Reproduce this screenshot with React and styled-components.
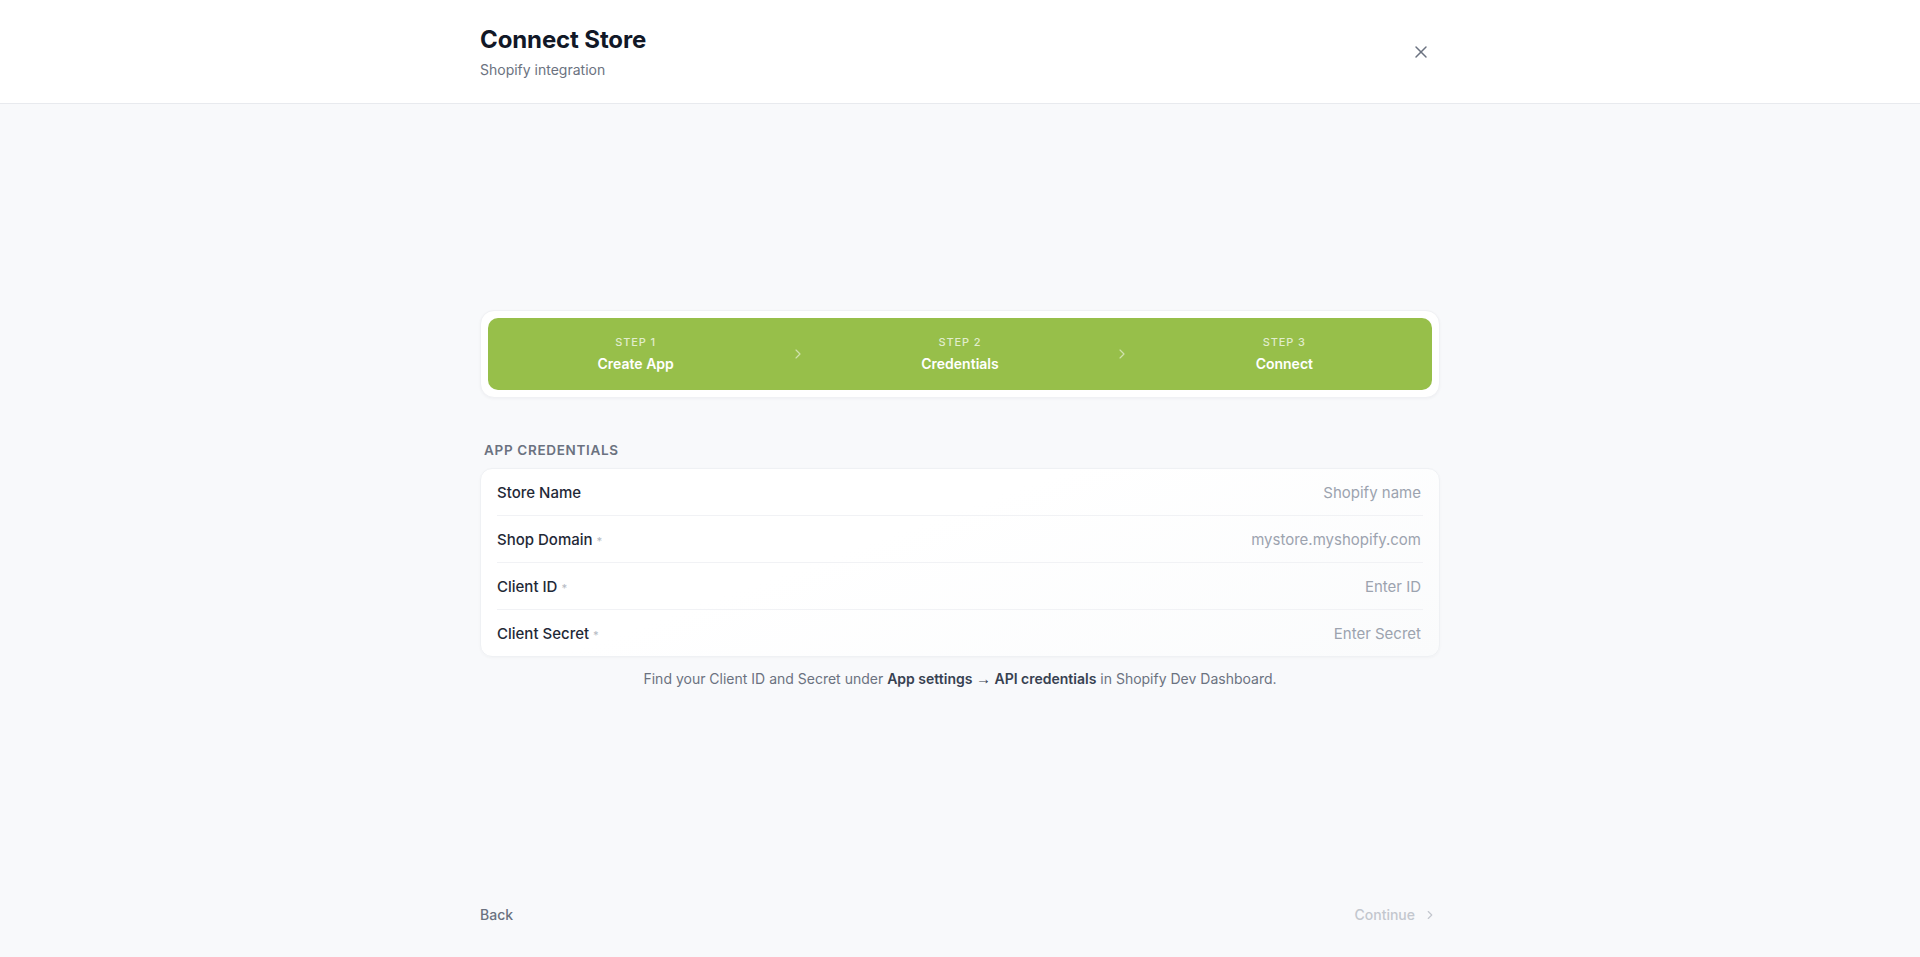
import React from 'react'
import styled, { createGlobalStyle } from 'styled-components'
import { X, ChevronRight } from 'lucide-react'

const GlobalStyle = createGlobalStyle`
  * { box-sizing: border-box; }
  body {
    margin: 0;
    font-family: Inter, "Noto Sans", "Liberation Sans", sans-serif;
    background: #f8f9fb;
    color: #111827;
  }
`

const Page = styled.div`
  min-height: 100vh;
  display: flex;
  flex-direction: column;
`
const Header = styled.header`
  background: #fff;
  border-bottom: 1px solid #e8eaee;
`
const Inner = styled.div`
  width: 960px;
  margin: 0 auto;
`
const HeaderInner = styled(Inner)`
  display: flex;
  align-items: center;
  justify-content: space-between;
  padding: 24px 0 23px;
`
const Title = styled.h1`
  margin: 0;
  font-size: 24px;
  line-height: 32px;
  font-weight: 700;
  color: #111827;
  letter-spacing: -0.005em;
`
const Subtitle = styled.p`
  margin: 4px 0 0;
  font-size: 14px;
  line-height: 20px;
  color: #6b7280;
`
const IconButton = styled.button`
  border: 0;
  background: none;
  padding: 4px;
  margin-right: 5px;
  display: flex;
  color: #6b7280;
  cursor: pointer;
`
const Main = styled.main`
  flex: 1;
  padding-top: 206px;
`
const StepperCard = styled.div`
  background: #fff;
  border: 1px solid #f0f1f4;
  border-radius: 14px;
  padding: 7px;
  box-shadow: 0 1px 3px rgba(16, 24, 40, 0.04);
`
const StepBar = styled.div`
  height: 72px;
  background: #97bf4a;
  border-radius: 10px;
  display: flex;
  align-items: center;
`
const Step = styled.div`
  flex: 1;
  display: flex;
  flex-direction: column;
  align-items: center;
  gap: 4px;
`
const StepNum = styled.span`
  font-size: 11px;
  line-height: 16px;
  font-weight: 500;
  letter-spacing: 0.08em;
  color: rgba(255, 255, 255, 0.72);
`
const StepName = styled.span`
  font-size: 14px;
  line-height: 20px;
  font-weight: 600;
  color: #fff;
`
const StepArrow = styled.div`
  width: 29px;
  display: flex;
  justify-content: center;
  color: rgba(255, 255, 255, 0.55);
`
const SectionLabel = styled.div`
  margin: 42px 0 8px;
  padding-left: 4px;
  font-size: 13.5px;
  line-height: 20px;
  font-weight: 600;
  letter-spacing: 0.05em;
  color: #6b7280;
`
const FormCard = styled.div`
  background: linear-gradient(160deg, #ffffff 0%, #ffffff 40%, #fafbfc 100%);
  border: 1px solid #eff1f4;
  border-radius: 12px;
  padding: 0 16px;
  box-shadow: 0 1px 3px rgba(16, 24, 40, 0.03);
`
const Row = styled.label`
  height: 47px;
  display: flex;
  align-items: center;
  justify-content: space-between;
  border-bottom: 1px solid #f1f2f5;
  &:last-child { border-bottom: 0; height: 46px; }
`
const Label = styled.span`
  font-size: 15px;
  font-weight: 500;
  color: #1f2937;
  white-space: nowrap;
`
const Required = styled.span`
  margin-left: 4px;
  color: #b6bbc4;
  font-size: 11px;
`
const Input = styled.input`
  flex: 1;
  border: 0;
  outline: none;
  background: transparent;
  text-align: right;
  font: inherit;
  font-size: 15px;
  color: #111827;
  &::placeholder { color: #9ca3af; }
`
const Help = styled.p`
  margin: 12px 0 0;
  text-align: center;
  font-size: 14px;
  line-height: 20px;
  color: #6b7280;
  b { font-weight: 600; color: #374151; }
`
const Arrow = styled.span`
  font-family: "Liberation Sans", sans-serif;
  font-weight: 400;
  font-size: 15px;
  line-height: 1;
`
const Footer = styled(Inner)`
  display: flex;
  justify-content: space-between;
  align-items: center;
  padding-bottom: 32px;
`
const FooterButton = styled.button`
  border: 0;
  background: none;
  padding: 0 ${({ disabled }) => (disabled ? '3px' : '0')} 0 0;
  display: flex;
  align-items: center;
  gap: 8px;
  font: inherit;
  font-size: 14px;
  line-height: 20px;
  font-weight: 500;
  color: ${({ disabled }) => (disabled ? '#c3c7ce' : '#6b7280')};
  cursor: ${({ disabled }) => (disabled ? 'default' : 'pointer')};
`

const steps = [
  { num: 'STEP 1', name: 'Create App' },
  { num: 'STEP 2', name: 'Credentials' },
  { num: 'STEP 3', name: 'Connect' },
]

const fields = [
  { label: 'Store Name', placeholder: 'Shopify name' },
  { label: 'Shop Domain', placeholder: 'mystore.myshopify.com', required: true },
  { label: 'Client ID', placeholder: 'Enter ID', required: true },
  { label: 'Client Secret', placeholder: 'Enter Secret', required: true },
]

export default function App () {
  return (
    <Page>
      <GlobalStyle />
      <Header>
        <HeaderInner>
          <div>
            <Title>Connect Store</Title>
            <Subtitle>Shopify integration</Subtitle>
          </div>
          <IconButton aria-label='Close'><X size={20} strokeWidth={1.75} /></IconButton>
        </HeaderInner>
      </Header>

      <Main>
        <Inner>
          {/* stepper */}
          <StepperCard>
            <StepBar>
              {steps.map((s, i) => (
                <React.Fragment key={s.num}>
                  {i > 0 && <StepArrow><ChevronRight size={16} strokeWidth={1.75} /></StepArrow>}
                  <Step>
                    <StepNum>{s.num}</StepNum>
                    <StepName>{s.name}</StepName>
                  </Step>
                </React.Fragment>
              ))}
            </StepBar>
          </StepperCard>

          {/* credentials form */}
          <SectionLabel>APP CREDENTIALS</SectionLabel>
          <FormCard>
            {fields.map(f => (
              <Row key={f.label}>
                <Label>{f.label}{f.required && <Required>*</Required>}</Label>
                <Input placeholder={f.placeholder} />
              </Row>
            ))}
          </FormCard>
          <Help>
            Find your Client ID and Secret under <b>App settings <Arrow>→</Arrow> API credentials</b> in Shopify Dev Dashboard.
          </Help>
        </Inner>
      </Main>

      <Footer>
        <FooterButton>Back</FooterButton>
        <FooterButton disabled>Continue <ChevronRight size={14} strokeWidth={2} /></FooterButton>
      </Footer>
    </Page>
  )
}
